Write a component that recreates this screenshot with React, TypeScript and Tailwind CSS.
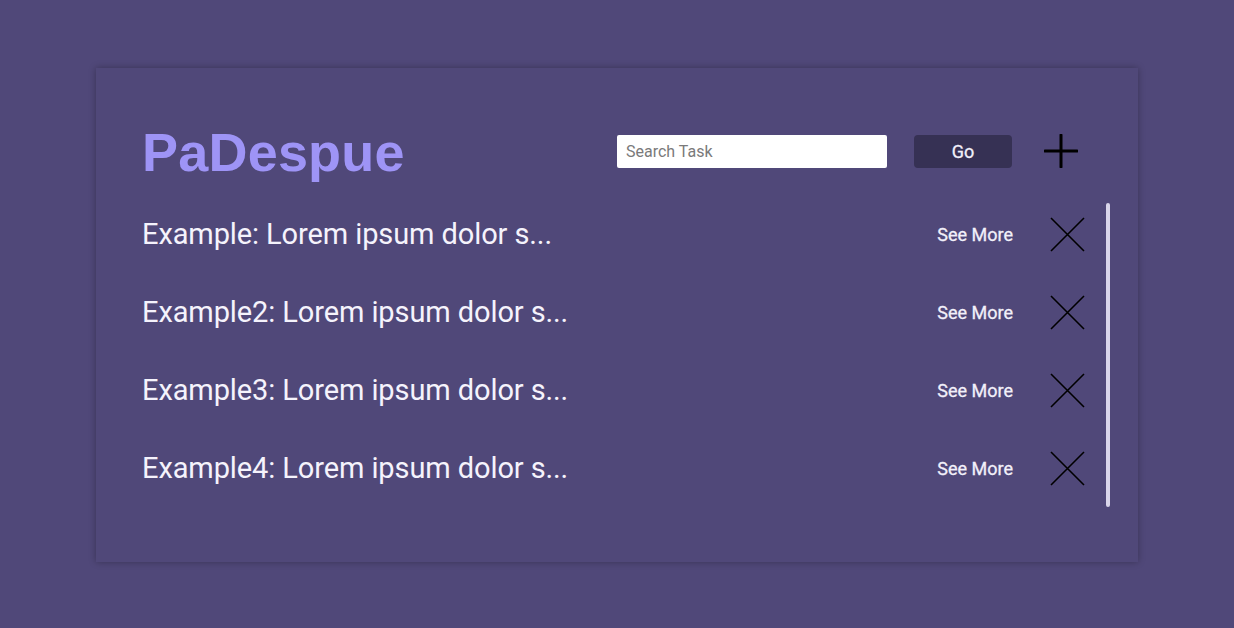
import React from "react";

const items = [
  "Example: Lorem ipsum dolor s...",
  "Example2: Lorem ipsum dolor s...",
  "Example3: Lorem ipsum dolor s...",
  "Example4: Lorem ipsum dolor s...",
];

function XIcon() {
  return (
    <svg width="35" height="35" viewBox="0 0 35 35" fill="none">
      <path d="M1 1 L34 34 M34 1 L1 34" stroke="#000" strokeWidth="1.6" />
    </svg>
  );
}

export default function App() {
  return (
    <div className="min-h-[628px] w-full bg-[#504879] pt-[68px]" style={{ fontFamily: "Roboto, 'Noto Sans', sans-serif" }}>
      <div className="mx-auto w-[1042px] h-[494px] bg-[#504879] shadow-[0_0_7px_rgba(0,0,0,0.3)] pt-[48px] pl-[46px] pr-[28px]">
        <div className="flex items-center h-[70px]">
          <h1 className="text-[54px] font-bold text-[#9e94f6] leading-none tracking-[0.2px] mt-[2px]" style={{ fontFamily: "'Liberation Sans', Arial, sans-serif" }}>
            PaDespue
          </h1>
          <div className="ml-auto flex items-center mr-[32px]">
            <input
              className="w-[270px] h-[33px] bg-white rounded-[2px] px-[9px] text-[16px] text-[#333] placeholder:text-[#7a7a7a] outline-none"
              placeholder="Search Task"
            />
            <button className="ml-[27px] w-[98px] h-[33px] rounded-[4px] bg-[#363154] text-[#f2f0fa] text-[18px] [-webkit-text-stroke:0.3px_#f2f0fa]">
              Go
            </button>
            <svg className="ml-[32px]" width="34" height="34" viewBox="0 0 34 34" fill="none">
              <path d="M17 1 V33 M1 17 H33" stroke="#000" strokeWidth="3" strokeLinecap="round" />
            </svg>
          </div>
        </div>
        <div className="mt-[17px] h-[304px] flex">
          <div className="flex-1 flex flex-col gap-[16px]">
            {items.map((t) => (
              <div key={t} className="h-[62px] flex items-center">
                <span className="text-[29px] text-[#f5f3fc] leading-none tracking-[-0.1px]">{t}</span>
                <span className="ml-auto text-[18px] text-[#f2f0fa] [-webkit-text-stroke:0.3px_#f2f0fa]">See More</span>
                <span className="ml-[37px] mr-[21px] flex items-center">
                  <XIcon />
                </span>
              </div>
            ))}
          </div>
          <div className="w-[4px] h-full rounded-full bg-[#d9d5ea]" />
        </div>
      </div>
    </div>
  );
}
